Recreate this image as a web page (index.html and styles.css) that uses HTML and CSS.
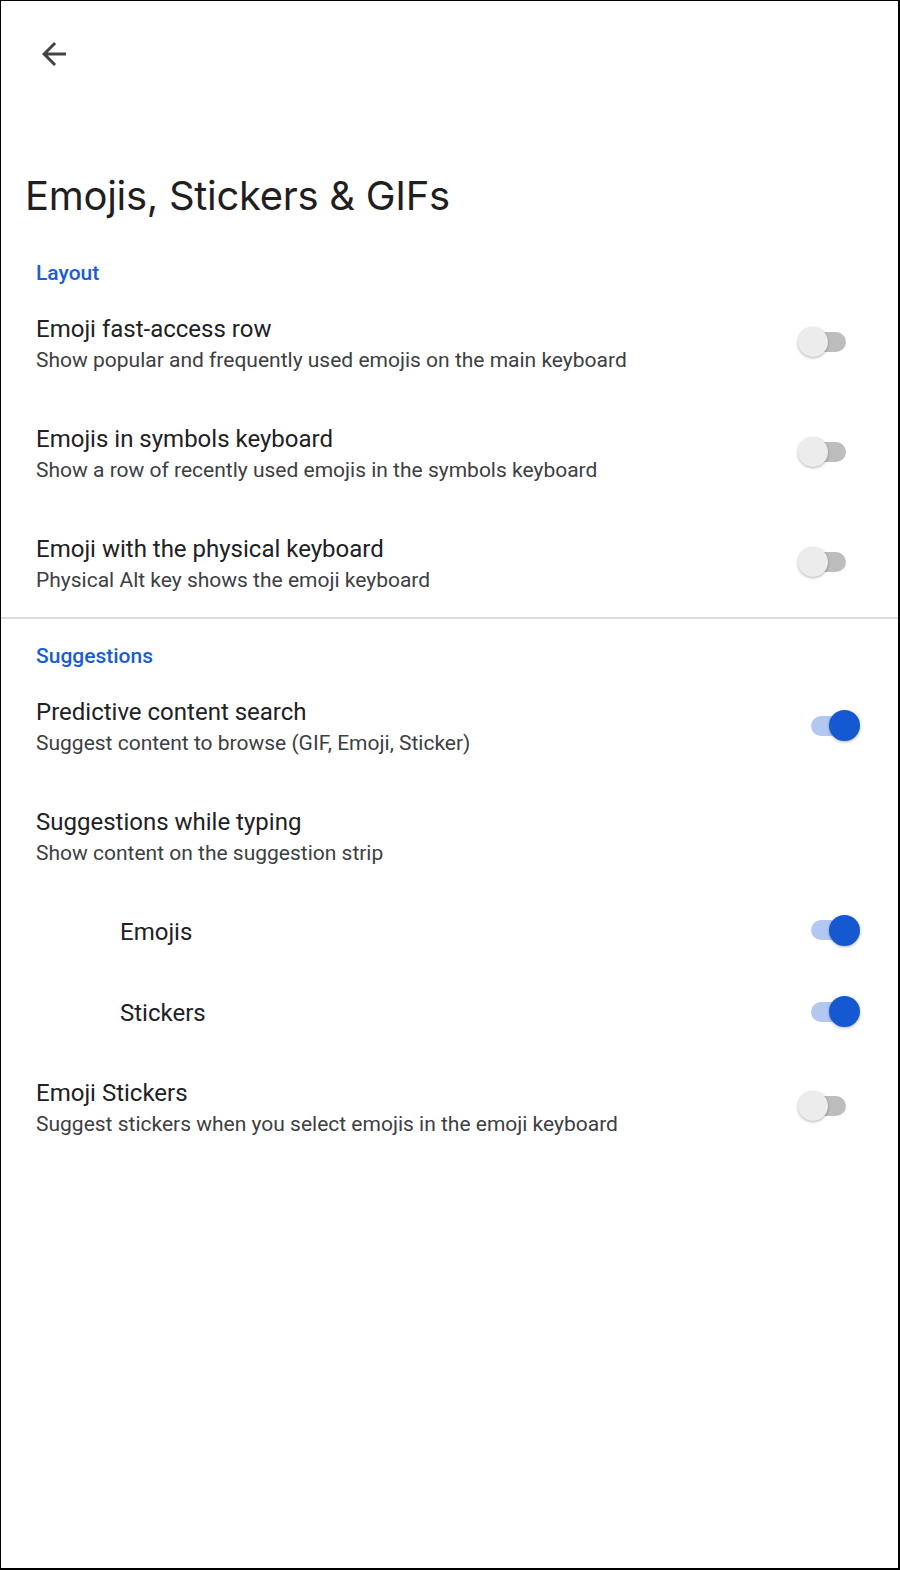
FILE: index.html
```html
<!DOCTYPE html>
<html>
<head>
<meta charset="utf-8">
<link rel="stylesheet" href="styles.css">
</head>
<body>
<div class="screen">
  <div class="topbar">
    <svg class="back" viewBox="0 0 24 24" width="36" height="36"><path d="M20 11H7.83l5.59-5.59L12 4l-8 8 8 8 1.41-1.41L7.83 13H20v-2z" fill="#444"/></svg>
  </div>
  <h1 class="title">Emojis, Stickers &amp; GIFs</h1>

  <div class="section-head">Layout</div>
  <div class="row">
    <div class="text"><div class="t">Emoji fast-access row</div><div class="s">Show popular and frequently used emojis on the main keyboard</div></div>
    <div class="toggle off"><span class="track"></span><span class="thumb"></span></div>
  </div>
  <div class="row">
    <div class="text"><div class="t">Emojis in symbols keyboard</div><div class="s">Show a row of recently used emojis in the symbols keyboard</div></div>
    <div class="toggle off"><span class="track"></span><span class="thumb"></span></div>
  </div>
  <div class="row">
    <div class="text"><div class="t">Emoji with the physical keyboard</div><div class="s">Physical Alt key shows the emoji keyboard</div></div>
    <div class="toggle off"><span class="track"></span><span class="thumb"></span></div>
  </div>
  <div class="divider"></div>

  <div class="section-head sugg">Suggestions</div>
  <div class="row">
    <div class="text"><div class="t">Predictive content search</div><div class="s">Suggest content to browse (GIF, Emoji, Sticker)</div></div>
    <div class="toggle on"><span class="track"></span><span class="thumb"></span></div>
  </div>
  <div class="row">
    <div class="text"><div class="t">Suggestions while typing</div><div class="s">Show content on the suggestion strip</div></div>
  </div>
  <div class="row single first">
    <div class="text"><div class="t">Emojis</div></div>
    <div class="toggle on"><span class="track"></span><span class="thumb"></span></div>
  </div>
  <div class="row single second">
    <div class="text"><div class="t">Stickers</div></div>
    <div class="toggle on"><span class="track"></span><span class="thumb"></span></div>
  </div>
  <div class="row">
    <div class="text"><div class="t">Emoji Stickers</div><div class="s">Suggest stickers when you select emojis in the emoji keyboard</div></div>
    <div class="toggle off"><span class="track"></span><span class="thumb"></span></div>
  </div>
</div>
</body>
</html>
```
FILE: styles.css
```css
* { box-sizing: border-box; }
html, body { margin: 0; padding: 0; background: #fff; }
.screen {
  width: 900px;
  height: 1570px;
  border: 1px solid #000;
  border-right-width: 2px;
  border-bottom-width: 2px;
  font-family: Roboto, "Noto Sans", sans-serif;
  color: #202124;
  overflow: hidden;
}
.topbar { height: 100px; padding: 35px 0 0 35px; }
.back { display: block; }
.title {
  margin: 0;
  padding-left: 24px;
  font-family: Inter, "Open Sans", sans-serif;
  font-weight: 400;
  font-size: 40px;
  line-height: 60px;
  height: 60px;
  margin-top: 65px;
  color: #1f1f1f;
  letter-spacing: -0.3px;
}
.section-head {
  margin-top: 32px;
  height: 30px;
  line-height: 30px;
  padding-left: 35px;
  color: #1a5cd4;
  font-size: 21px;
  font-weight: 500;
}
.section-head.sugg { margin-top: 22px; }
.row {
  display: flex;
  align-items: center;
  padding: 26px 0 22px 35px;
  height: 110px;
}
.text { flex: 1; min-width: 0; }
.t { font-size: 24px; line-height: 31px; color: #202124; }
.s { font-size: 21px; line-height: 31px; color: #3c4043; }
.row.single { padding: 0 0 0 119px; height: 80px; }
.row.single.second { height: 81px; }
.row.single .t { line-height: 30px; margin-top: 2px; }
.divider { height: 2px; background: #dcdcdc; margin-top: -1px; }

.toggle { position: relative; width: 46px; height: 20px; flex: none; margin-bottom: 7px; }
.toggle.off { margin-right: 52px; }
.toggle.on { margin-right: 41px; margin-bottom: 5px; }
.row.single.first .toggle.on { margin-bottom: 2px; }
.row.single.second .toggle.on { margin-bottom: 0; }
.track { display: block; width: 46px; height: 20px; border-radius: 10px; background: #bdbdbd; }
.thumb {
  position: absolute;
  top: -5px;
  width: 30px;
  height: 30px;
  border-radius: 50%;
  background: #ececec;
  box-shadow: 0 1px 3px rgba(0,0,0,0.3);
}
.off .thumb { left: -2px; }
.on .track { background: #b3c8f0; }
.on .thumb { right: -3px; width: 31px; height: 31px; top: -5.5px; background: #1559d2; box-shadow: 0 1px 3px rgba(0,0,0,0.3); }
```
